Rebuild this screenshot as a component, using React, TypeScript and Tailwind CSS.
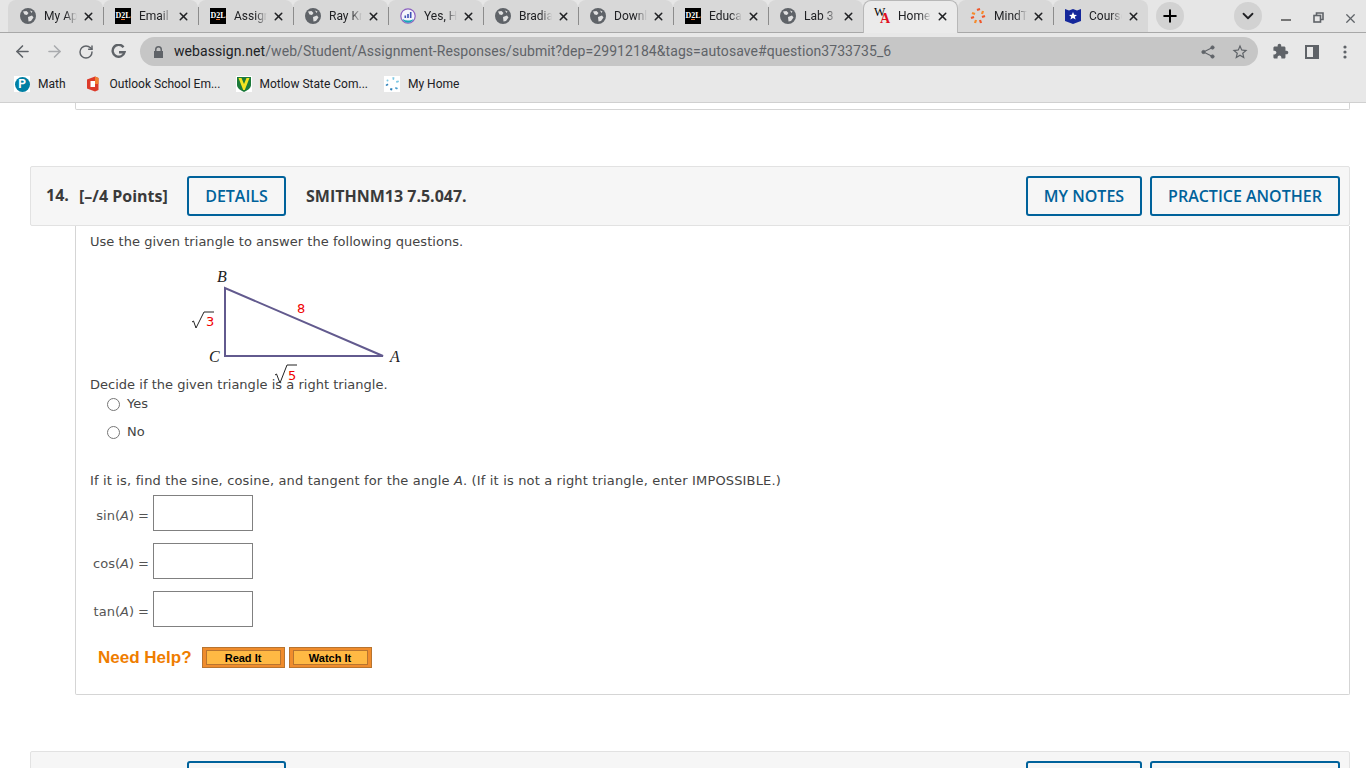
import React from "react";
import { ArrowLeft, ArrowRight, RotateCw, X, Plus, ChevronDown } from "lucide-react";

const Globe = () => (
  <svg width="16" height="16" viewBox="0 0 16 16" className="shrink-0">
    <circle cx="8" cy="8" r="8" fill="#5f6368" />
    <path d="M3 3.5 L6.5 3 L8.5 5 L7 7 L4.5 6.5 Z M8 9 L12 7.5 L13.5 9.5 L11 13 L8.5 13.5 Z M10 2.5 L12.5 3.5 L11.5 5 Z" fill="#e0e0e0" />
  </svg>
);
const D2L = () => (
  <div className="w-4 h-4 bg-black text-white shrink-0 flex items-center justify-center text-[8px] font-bold leading-none relative" style={{ fontFamily: '"Liberation Serif", serif' }}>
    D2L
    <span className="absolute left-[6px] top-[11px] w-[4px] h-px bg-[#e8702a]" />
  </div>
);
const Chart = () => (
  <svg width="16" height="16" viewBox="0 0 16 16" className="shrink-0">
    <circle cx="8" cy="8" r="7.2" fill="#f4f4fb" stroke="#8a5fc0" strokeWidth="1.2" />
    <path d="M4.5 7.5h1.6v2.5H4.5zM7.2 6h1.6v4H7.2zM9.9 4h1.6v6H9.9z" fill="#3f51b5" />
    <path d="M2.5 11c3.5 2 7.500 2 11 0 -1 2.500-3 3.800-5.500 3.800S3.500 13.500 2.500 11z" fill="#19a5b8" />
  </svg>
);
const WA = () => (
  <div className="w-4 h-4 relative shrink-0" style={{ fontFamily: '"Liberation Serif", serif' }}>
    <span className="absolute left-0 top-[-2px] text-[12px] leading-none text-black">W</span>
    <span className="absolute left-[6px] top-[4px] text-[14px] font-bold leading-none text-[#e01020]">A</span>
  </div>
);
const Spinner = () => (
  <svg width="16" height="16" viewBox="0 0 16 16" className="shrink-0">
    {[[7, 2, 10, 1, "#f0562a"], [13, 3, 12, 6, "#f58a2a"], [15, 8, 12, 9, "#f0562a"], [11, 15, 10, 12, "#f0562a"], [5, 15, 6, 12, "#f58a2a"], [1, 10, 4, 9, "#f0562a"], [2, 5, 5, 6, "#f58a2a"]].map((l, i) => (
      <line key={i} x1={l[0] as number} y1={l[1] as number} x2={l[2] as number} y2={l[3] as number} stroke={l[4] as string} strokeWidth="2.2" />
    ))}
  </svg>
);
const Shield = () => (
  <svg width="16" height="16" viewBox="0 0 16 16" className="shrink-0">
    <path d="M0 1 L4 2.500 L8 1 L12 2.500 L16 1 V13 L8 16 L0 13 Z" fill="#14279b" />
    <path d="M8 4l1.200 2.700 2.800.2-2.200 1.800.8 2.800L8 9.900l-2.600 1.600.8-2.800L4 6.900l2.800-.2z" fill="#fff" />
  </svg>
);

const tabs: { icon: React.ReactNode; t: string }[] = [
  { icon: <Globe />, t: "My Apps" },
  { icon: <D2L />, t: "Email" },
  { icon: <D2L />, t: "Assignment" },
  { icon: <Globe />, t: "Ray Kroc" },
  { icon: <Chart />, t: "Yes, How" },
  { icon: <Globe />, t: "Bradian" },
  { icon: <Globe />, t: "Download" },
  { icon: <D2L />, t: "Education" },
  { icon: <Globe />, t: "Lab 3 Re" },
  { icon: <WA />, t: "Homework" },
  { icon: <Spinner />, t: "MindTap" },
  { icon: <Shield />, t: "Course" },
];

const Tab = ({ icon, t, active, sep }: { icon: React.ReactNode; t: string; active?: boolean; sep?: boolean }) => (
  <div className={`w-[95px] shrink-0 relative flex items-center rounded-t-[8px] ${active ? "h-[33px] z-10 bg-[#ebebeb] border border-b-0 border-[#b8b8b8] pb-[2px] pl-[10px]" : "h-[32px] bg-[#d8d8d8] pl-[12px]"}`}>
    {icon}
    <span className="ml-2 w-[33px] overflow-hidden whitespace-nowrap text-[12px] text-[#202124] [mask-image:linear-gradient(to_right,black_65%,transparent)]">{t}</span>
    <X size={13} strokeWidth={2.8} className="ml-[5px] shrink-0 text-[#202124]" />
    {sep && <span className="absolute -right-px top-[7px] h-[18px] w-px bg-[#8c8c8c] z-10" />}
  </div>
);

const Blue = ({ children, w }: { children: React.ReactNode; w: string }) => (
  <div className={`${w} h-10 shrink-0 border-2 border-[#00629b] rounded-[3px] flex items-center justify-center text-[#00629b] text-[16px] font-semibold`}>{children}</div>
);

const Answer = ({ fn }: { fn: string }) => (
  <div className="flex items-center h-9">
    <span className="w-[63px] text-right text-[13px] text-[#555] pr-[4px] whitespace-nowrap pt-[6px]">{fn}(<i>A</i>) =</span>
    <div className="w-[100px] h-9 border border-[#808080] bg-white" />
  </div>
);

const HelpBtn = ({ children }: { children: React.ReactNode }) => (
  <div className="w-[83px] h-[21px] bg-[#f08c2c] border border-[#b8742f] px-[3px] py-[2px] flex">
    <div className="flex-1 bg-[#ffb944] border border-[#b8742f] flex items-center justify-center text-[11px] font-bold text-black" style={{ fontFamily: '"Liberation Sans", sans-serif' }}>{children}</div>
  </div>
);

export default function App() {
  return (
    <div className="w-[1366px] h-[768px] overflow-hidden bg-white flex flex-col" style={{ fontFamily: '"DejaVu Sans", sans-serif' }}>
      <div className="shrink-0" style={{ fontFamily: 'Roboto, sans-serif' }}>
        <div className="h-[33px] bg-[#e6e6e6] flex border-b border-[#a8a8a8]">
          <div className="flex pl-[8px] items-start">
            {tabs.slice(0, 9).map((x, i) => <Tab key={i} icon={x.icon} t={x.t} sep={i !== 8} />)}
            <Tab icon={tabs[9].icon} t={tabs[9].t} active />
            {tabs.slice(10).map((x, i) => <Tab key={i} icon={x.icon} t={x.t} sep={i === 0} />)}
          </div>
          <div className="ml-[8px] mt-[2px] w-7 h-7 rounded-full bg-[#d2d2d2] flex items-center justify-center">
            <Plus size={20} strokeWidth={2.4} className="text-black" />
          </div>
          <div className="ml-[50px] mt-[2px] w-7 h-7 rounded-full bg-[#d2d2d2] flex items-center justify-center">
            <ChevronDown size={18} strokeWidth={2.4} className="text-[#202124]" />
          </div>
          <div className="ml-[19px] mt-[11px] flex items-start">
            <span className="mt-[8px] w-[10px] h-[2px] bg-[#757575]" />
            <svg width="11" height="11" viewBox="0 0 11 11" fill="none" stroke="#5f6368" strokeWidth="1.6" className="ml-[22px] mt-px"><rect x="1" y="3.500" width="6.500" height="6.500" /><path d="M3.500 3.500V1H10V7.500H7.500" /></svg>
            <X size={15} strokeWidth={2} className="ml-[19px] text-[#5f6368]" />
          </div>
        </div>
        <div className="h-[37px] bg-[#e8e8e8] flex items-center">
          <ArrowLeft size={19} strokeWidth={2} className="ml-[13px] text-[#5f6368]" />
          <ArrowRight size={19} strokeWidth={2} className="ml-[13px] text-[#a9abae]" />
          <RotateCw size={16} strokeWidth={2.200} className="ml-[14px] text-[#5f6368]" />
          <svg width="15" height="15" viewBox="0 0 15 15" className="ml-[17px] shrink-0" fill="none" stroke="#5f6368" strokeWidth="2.400"><path d="M12.500 3.200A6 6 0 1 0 13.500 8.200H8" /></svg>
          <div className="ml-[14px] w-[1118px] h-[29px] rounded-full bg-[#c6c6c6] flex items-center pl-[14px] pr-[9px] shrink-0">
            <svg width="9" height="12" viewBox="0 0 9 12" className="shrink-0"><path d="M1 5V3.500a3.500 3.500 0 0 1 7 0V5h1v7H0V5zM2.500 5h4V3.500a2 2 0 0 0-4 0z" fill="#5f6368" fillRule="evenodd" /></svg>
            <span className="ml-[11px] text-[14px] tracking-[0.07px] text-[#5f6368] whitespace-nowrap"><span className="text-[#202124]">webassign.net</span>/web/Student/Assignment-Responses/submit?dep=29912184&amp;tags=autosave#question3733735_6</span>
            <svg width="14" height="14" viewBox="0 0 14 14" className="ml-auto mr-[16px]" fill="#5f6368" stroke="#5f6368"><circle cx="11.500" cy="2.500" r="1.600" /><circle cx="2.500" cy="7" r="1.600" /><circle cx="11.500" cy="11.500" r="1.600" /><path d="M11.500 2.500L2.500 7L11.500 11.500" fill="none" strokeWidth="1.100" /></svg>
            <svg width="18" height="18" viewBox="0 0 24 24" fill="#5f6368"><path d="M22 9.240l-7.190-.62L12 2 9.190 8.630 2 9.240l5.460 4.730L5.820 21 12 17.270 18.180 21l-1.630-7.030L22 9.240zM12 15.400l-3.760 2.270 1-4.280-3.320-2.880 4.380-.38L12 6.100l1.710 4.040 4.380.38-3.320 2.880 1 4.280L12 15.400z" /></svg>
          </div>
          <svg width="17" height="17" viewBox="0 0 24 24" className="ml-[14px] shrink-0" fill="#5f6368"><path d="M20.500 11H19V7c0-1.100-.9-2-2-2h-4V3.500C13 2.120 11.880 1 10.500 1S8 2.120 8 3.500V5H4c-1.100 0-1.990.9-1.990 2v3.800H3.500c1.490 0 2.700 1.210 2.700 2.700s-1.210 2.700-2.700 2.700H2V20c0 1.100.9 2 2 2h3.800v-1.500c0-1.490 1.210-2.700 2.700-2.700 1.490 0 2.700 1.210 2.700 2.700V22H17c1.100 0 2-.9 2-2v-4h1.500c1.380 0 2.500-1.120 2.500-2.500S21.880 11 20.500 11z" /></svg>
          <svg width="14" height="14" viewBox="0 0 14 14" className="ml-[16px] shrink-0"><path d="M0 0h14v14H0z M2 2v10h6V2z" fill="#5f6368" fillRule="evenodd" /></svg>
          <svg width="4" height="14" viewBox="0 0 4 14" className="ml-[24px] shrink-0" fill="#5f6368"><circle cx="2" cy="2" r="1.600" /><circle cx="2" cy="7" r="1.600" /><circle cx="2" cy="12" r="1.600" /></svg>
        </div>
        <div className="h-[33px] bg-[#e8e8e8] border-b border-[#d0d0d0] flex items-center pl-[14px] pb-[4px] text-[12px] text-[#202124] whitespace-nowrap">
          <div className="w-4 h-4 bg-white flex items-center justify-center"><div className="w-[15px] h-[15px] rounded-full bg-[#007fa3] text-white text-[12px] font-bold flex items-center justify-center leading-none">P</div></div>
          <span className="ml-2">Math</span>
          <svg width="16" height="16" viewBox="0 0 16 16" className="ml-[19px]"><path d="M2 3.500L10 0.500L13.500 2V14L10 15.500L2 12.500Z" fill="#dc3a2a" /><path d="M10 0.500L13.500 2V8H10Z" fill="#f08030" /><path d="M5.500 5h4.500v6H5.500z" fill="#fff" /></svg>
          <span className="ml-[9px]">Outlook School Em...</span>
          <svg width="16" height="16" viewBox="0 0 16 16" className="ml-[16px]"><rect width="16" height="16" fill="#fff" /><path d="M1 1h14v8c0 3-3 5-7 7-4-2-7-4-7-7z" fill="#1c7a3a" /><path d="M2.500 2h3L8 8l2.500-6h3L8.800 14H7.200z" fill="#f2e422" /></svg>
          <span className="ml-[7px]">Motlow State Com...</span>
          <svg width="16" height="16" viewBox="0 0 16 16" className="ml-[16px]"><rect width="16" height="16" fill="#fff" /><g fill="#2c7fb8"><path d="M8.500 1l2 .5-.5 2.500-1.500-.5z" fill="#7ec8e3" /><path d="M12 5l2.500-.5.5 1.500-2.500 1z" fill="#7ec8e3" /><path d="M1.500 9l2-1.500 1 1.500-2 1z" /><path d="M6.500 12l2 .5-.5 2-2-.5z" /><path d="M11.500 11l2.500 1-1 1.500-2-1z" fill="#4a9fd0" /><circle cx="3.500" cy="4.500" r="1" fill="#7ec8e3" /></g></svg>
          <span className="ml-2">My Home</span>
        </div>
      </div>

      <div className="flex-1 min-h-0 overflow-hidden">
        <div className="ml-[75px] w-[1275px] h-[7px] border border-t-0 border-[#d5d5d5] rounded-b-[2px]" />
        <div className="ml-[30px] w-[1320px] h-[60px] mt-[56px] bg-[#f6f6f6] border border-[#e2e2e2] rounded-[2px] flex items-center pl-[15px] pr-[9px] text-[#3a3a3a]" style={{ fontFamily: '"Open Sans", sans-serif' }}>
          <span className="text-[16px] font-bold -mt-[2px] w-[33px]">14.</span>
          <span className="text-[16px] font-bold w-[108px] whitespace-nowrap">[–/4 Points]</span>
          <Blue w="w-[99px]">DETAILS</Blue>
          <span className="ml-5 text-[16px] font-bold whitespace-nowrap">SMITHNM13 7.5.047.</span>
          <div className="ml-auto flex gap-2">
            <Blue w="w-[116px]">MY NOTES</Blue>
            <Blue w="w-[190px]">PRACTICE ANOTHER</Blue>
          </div>
        </div>
        <div className="ml-[75px] w-[1275px] h-[469px] border border-t-0 border-[#d5d5d5] rounded-b-[2px] pl-[14px] text-[13px] text-[#444]">
          <p className="pt-[8px] leading-[16px] tracking-[0.03px]">Use the given triangle to answer the following questions.</p>
          <svg width="340" height="127" viewBox="0 0 340 127" className="block overflow-visible" style={{ marginLeft: -14 }}>
            <path d="M149 38 V106 H307 Z" fill="none" stroke="#625a8e" strokeWidth="2" />
            <g fontFamily='"Liberation Serif", serif' fontStyle="italic" fontSize="16" fill="#222">
              <text x="141" y="32">B</text>
              <text x="133" y="112">C</text>
              <text x="314" y="112">A</text>
            </g>
            <text x="221" y="63" fill="#f00000" fontSize="13" fontFamily='"DejaVu Sans", sans-serif'>8</text>
            <path d="M116 72 l1.500 -1 L120 78 L128 62 H138" fill="none" stroke="#222" strokeWidth="1" />
            <text x="130" y="76" fill="#f00000" fontSize="13" fontFamily='"DejaVu Sans", sans-serif'>3</text>
            <path d="M199 125 l1.500 -1 L204 133 L211 115 H221" fill="none" stroke="#222" strokeWidth="1" />
            <text x="212" y="130" fill="#f00000" fontSize="13" fontFamily='"DejaVu Sans", sans-serif'>5</text>
          </svg>
          <p className="leading-[16px] tracking-[0.02px]">Decide if the given triangle is a right triangle.</p>
          <div className="ml-[17px] mt-[3px] flex flex-col gap-[12px]">
            <label className="flex items-center h-4"><span className="w-[13px] h-[13px] rounded-full border border-[#767676] bg-white" /><span className="ml-[7px]">Yes</span></label>
            <label className="flex items-center h-4"><span className="w-[13px] h-[13px] rounded-full border border-[#767676] bg-white" /><span className="ml-[7px]">No</span></label>
          </div>
          <p className="mt-[33px] leading-[16px] tracking-[0.16px] whitespace-nowrap">If it is, find the sine, cosine, and tangent for the angle <i>A</i>. (If it is not a right triangle, enter IMPOSSIBLE.)</p>
          <div className="mt-[6px] flex flex-col gap-3">
            <Answer fn="sin" />
            <Answer fn="cos" />
            <Answer fn="tan" />
          </div>
          <div className="mt-[18px] ml-[8px] flex items-center">
            <span className="text-[17px] font-bold text-[#ef7d00] mr-[10px] whitespace-nowrap" style={{ fontFamily: '"Liberation Sans", sans-serif' }}>Need Help?</span>
            <HelpBtn>Read It</HelpBtn>
            <div className="w-1" />
            <HelpBtn>Watch It</HelpBtn>
          </div>
        </div>
        <div className="ml-[30px] w-[1320px] h-[60px] mt-[56px] bg-[#f6f6f6] border border-[#e2e2e2] rounded-[2px] flex items-center pl-[156px] pr-[9px]">
          <div className="w-[99px] h-10 shrink-0 border-2 border-[#00629b] rounded-[3px]" />
          <div className="ml-auto flex gap-2">
            <div className="w-[116px] h-10 border-2 border-[#00629b] rounded-[3px]" />
            <div className="w-[190px] h-10 border-2 border-[#00629b] rounded-[3px]" />
          </div>
        </div>
      </div>
    </div>
  );
}
